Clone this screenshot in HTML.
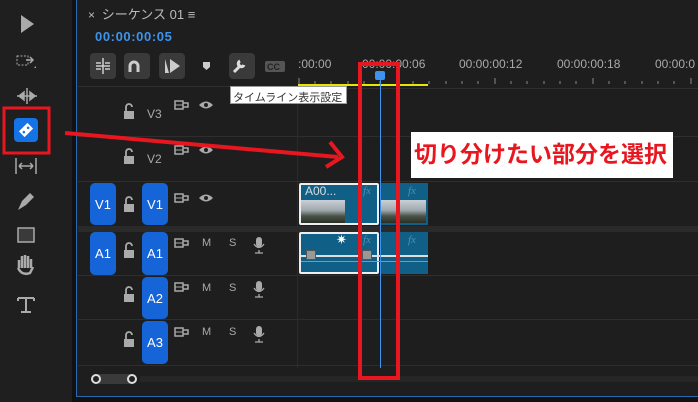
<!DOCTYPE html>
<html><head><meta charset="utf-8"><style>
*{margin:0;padding:0;box-sizing:border-box}
body{width:698px;height:402px;overflow:hidden;background:#1e1e1e;font-family:"Liberation Sans","Noto Sans CJK JP",sans-serif;position:relative;color:#aaa}
.a{position:absolute}
.tb{position:absolute;left:0;top:0;width:72px;height:402px;background:#1f1f1f}
.btn{position:absolute;top:53px;width:26px;height:26px;background:#3a3a3a;border-radius:4px}
.row{position:absolute;left:78px;width:620px;border-bottom:1px solid #2e2e2e}
.blue{position:absolute;width:26px;background:#1565d8;border-radius:5px;color:#fff;font-size:13px;display:flex;align-items:center;justify-content:center}
.lbl{position:absolute;font-size:12px;color:#aaa}
.tc{position:absolute;top:57px;font-size:12px;color:#aaa}
.clip{position:absolute;background:#0f5f86}
.fx{position:absolute;font-style:italic;font-size:11px;color:#4f8fae;font-family:"Liberation Serif",serif}
.thumb{position:absolute;background:linear-gradient(#c9d1d6 0%,#9fa8ac 45%,#4a5247 70%,#2a2f26 100%)}
</style></head><body>
<div class="tb"></div>
<div class="a" style="left:72px;top:0;width:4px;height:402px;background:#111"></div>
<div class="a" style="left:76px;top:0;width:1px;height:397px;background:#2a6ab0"></div>
<div class="a" style="left:76px;top:396px;width:622px;height:1px;background:#2a6ab0"></div>
<div class="a" style="left:76px;top:397px;width:622px;height:5px;background:#111"></div>

<svg class="a" style="left:0;top:0" width="72" height="340">
<path d="M21 15 L21 33 L34 24 Z" fill="#aaa"/>
<rect x="17" y="56" width="11" height="9" fill="none" stroke="#aaa" stroke-dasharray="2,1.5"/>
<path d="M26 60 h7 M30 57 l3 3 -3 3" stroke="#aaa" fill="none" stroke-width="1.5"/>
<path d="M34 68 l2 0 0 -2z" fill="#aaa"/>
<path d="M17 96 h20 M19 96 l5 -4 v8 z M35 96 l-5 -4 v8z M27 88 v16" stroke="#aaa" fill="#aaa" stroke-width="1.5"/>
<rect x="14" y="118" width="24" height="24" rx="4" fill="#1473e6"/>
<g transform="rotate(-45 26 130)"><rect x="20" y="126" width="12" height="8" fill="#fff"/><circle cx="23" cy="130" r="1.3" fill="#1473e6"/><circle cx="29" cy="130" r="1.3" fill="#1473e6"/></g>
<rect x="4" y="108" width="45" height="45" fill="none" stroke="#e8161e" stroke-width="3"/>
<path d="M16 158 v16 M36 158 v16 M19 166 h14 M19 166 l3 -3 M19 166 l3 3 M33 166 l-3 -3 M33 166 l-3 3" stroke="#aaa" stroke-width="1.5" fill="none"/>
<path d="M18 210 l4 -9 8 -8 4 4 -8 8 z" fill="#aaa"/>
<rect x="18" y="228" width="16" height="14" fill="#3a3a3a" stroke="#aaa" stroke-width="1.5"/>
<path d="M19 268 v-8 m3 -4 v12 m3 -13 v13 m3 -12 v12 m3 -9 v9 M18 268 q4 8 12 5 l3 -6" stroke="#aaa" stroke-width="2.5" fill="none"/>
<path d="M18 298 h16 M26 298 v14 M21 312 h10 M18 298 v3 M34 298 v3" stroke="#aaa" stroke-width="2" fill="none"/>
</svg>

<div class="a" style="left:88px;top:4px;font-size:12px;color:#bbb">× &nbsp;<span style="font-size:13px">シーケンス 01 ≡</span></div>
<div class="a" style="left:95px;top:29px;font-size:13px;color:#3c94ee;font-weight:bold;letter-spacing:.6px">00:00:00:05</div>
<div class="btn" style="left:90px"></div>
<div class="btn" style="left:124px"></div>
<div class="btn" style="left:159px"></div>
<div class="btn" style="left:229px"></div>
<svg class="a" style="left:90px;top:53px" width="200" height="26">
<path d="M13 5 v16 M6 10 h5 M6 16 h5 M15 10 h5 M15 16 h5 M6 13 h14" stroke="#ccc" stroke-width="1.5"/>
<path d="M40 19 v-6 a4 4 0 0 1 8 0 v6" stroke="#ccc" stroke-width="3" fill="none"/>
<path d="M75 6 v14 h4 z M80 6 l10 7 -10 7z" fill="#ccc"/>
<path d="M113 9 h7 v5 l-3.5 3 -3.5 -3z" fill="#ccc"/>
<path d="M144 19 l7 -7 M150 8 a3 3 0 1 0 4 4" stroke="#ddd" stroke-width="3" fill="none"/>
<rect x="175" y="8" width="20" height="11" rx="2" fill="#555"/><text x="177" y="17" font-size="9" fill="#222" font-weight="bold" font-family="Liberation Sans">CC</text>
</svg>
<div class="a" style="left:78px;top:86px;width:220px;height:1px;background:#2e2e2e"></div>

<div class="tc" style="left:298px">:00:00</div>
<div class="tc" style="left:362px">00:00:00:06</div>
<div class="tc" style="left:459px">00:00:00:12</div>
<div class="tc" style="left:557px">00:00:00:18</div>
<div class="tc" style="left:655px">00:00:0</div>
<svg class="a" style="left:298px;top:70px" width="400" height="20">
<g stroke="#888" stroke-width="1">
<path d="M1 8v6 M17 11v3 M33 11v3 M50 11v3 M66 11v3 M82 11v3 M99 8v6 M115 11v3 M131 11v3 M148 11v3 M164 11v3 M180 11v3 M197 8v6 M213 11v3 M229 11v3 M246 11v3 M262 11v3 M278 11v3 M295 8v6 M311 11v3 M327 11v3 M344 11v3 M360 11v3 M376 11v3 M393 8v6"/>
</g>
<rect x="-8" y="14" width="138" height="2" fill="#e6e600"/>
</svg>
<div class="a" style="left:298px;top:88px;width:400px;height:1px;background:#2e2e2e"></div>
<div class="a" style="left:297px;top:88px;width:1px;height:280px;background:#2a2a2a"></div>

<div class="row" style="top:90px;height:47px"></div>
<div class="row" style="top:137px;height:45px"></div>
<div class="a" style="left:78px;top:226px;width:620px;height:6px;background:#2a2a2a"></div>
<div class="row" style="top:232px;height:44px"></div>
<div class="row" style="top:276px;height:44px"></div>
<div class="row" style="top:320px;height:46px"></div>

<svg class="a" style="left:120px;top:95px" width="150" height="270">
<g fill="#aaa">
<g id="l"><rect x="4" y="16" width="10" height="8"/><path d="M6 16 v-4 a3 3 0 0 1 6 0" stroke="#aaa" stroke-width="1.8" fill="none"/></g>
<use href="#l" y="45"/><use href="#l" y="93"/><use href="#l" y="139"/><use href="#l" y="183"/><use href="#l" y="228"/>
<g id="t"><path d="M55 6 h8 v8 h-8z M63 8 h5 v4 h-5z" stroke="#aaa" stroke-width="1.5" fill="none"/><path d="M55 10 h8" stroke="#aaa"/></g>
<use href="#t" y="45"/><use href="#t" y="93"/><use href="#t" y="138"/><use href="#t" y="182"/><use href="#t" y="227"/>
<g id="e"><path d="M79 10 q7 -7 14 0 q-7 7 -14 0z"/><circle cx="86" cy="10" r="2" fill="#1e1e1e"/></g>
<use href="#e" y="45"/><use href="#e" y="93"/>
<g id="m"><rect x="136" y="142" width="6" height="10" rx="3"/><path d="M134 149 q5 7 10 0 M139 155 v3 M135 158 h8" stroke="#aaa" stroke-width="1.3" fill="none"/></g>
<use href="#m" y="44"/><use href="#m" y="89"/>
</g>
</svg>
<div class="lbl" style="left:147px;top:107px">V3</div>
<div class="lbl" style="left:147px;top:152px">V2</div>
<div class="lbl" style="left:202px;top:237px;font-size:11px">M</div><div class="lbl" style="left:229px;top:237px;font-size:11px">S</div>
<div class="lbl" style="left:202px;top:282px;font-size:11px">M</div><div class="lbl" style="left:229px;top:282px;font-size:11px">S</div>
<div class="lbl" style="left:202px;top:326px;font-size:11px">M</div><div class="lbl" style="left:229px;top:326px;font-size:11px">S</div>

<div class="blue" style="left:90px;top:183px;height:42px">V1</div>
<div class="blue" style="left:142px;top:183px;height:42px">V1</div>
<div class="blue" style="left:90px;top:232px;height:43px">A1</div>
<div class="blue" style="left:142px;top:232px;height:43px">A1</div>
<div class="blue" style="left:142px;top:277px;height:42px">A2</div>
<div class="blue" style="left:142px;top:321px;height:43px">A3</div>

<div class="clip" style="left:299px;top:183px;width:80px;height:42px;border:2px solid #eee;border-radius:2px"></div>
<div class="thumb" style="left:301px;top:200px;width:44px;height:23px"></div>
<div class="a" style="left:305px;top:184px;font-size:12px;color:#ddd">A00...</div>
<div class="fx" style="left:363px;top:185px">fx</div>
<div class="clip" style="left:380px;top:183px;width:48px;height:42px"></div>
<div class="thumb" style="left:380px;top:200px;width:46px;height:23px"></div>
<div class="fx" style="left:408px;top:185px">fx</div>

<div class="clip" style="left:299px;top:232px;width:80px;height:42px;border:2px solid #eee;border-radius:2px"></div>
<div class="clip" style="left:380px;top:232px;width:48px;height:42px"></div>
<div class="a" style="left:301px;top:255px;width:127px;height:2px;background:#ddd"></div>
<div class="a" style="left:301px;top:261px;width:127px;height:1px;background:#4aa8e0"></div>
<div class="a" style="left:306px;top:250px;width:10px;height:10px;background:#999;border:1px solid #555"></div>
<div class="a" style="left:362px;top:250px;width:10px;height:10px;background:#999;border:1px solid #555"></div>
<div class="a" style="left:336px;top:232px;font-size:13px;color:#fff">✷</div>
<div class="fx" style="left:363px;top:234px">fx</div>
<div class="fx" style="left:408px;top:234px">fx</div>

<div class="a" style="left:375px;top:71px;width:10px;height:9px;background:#3c94ee;border-radius:2px"></div>
<div class="a" style="left:380px;top:78px;width:1px;height:290px;background:#3c94ee"></div>

<div class="a" style="left:94px;top:374px;width:40px;height:10px;background:#3a3a3a;border-radius:5px"></div>
<div class="a" style="left:91px;top:374px;width:10px;height:10px;border:2px solid #ddd;border-radius:50%;background:#222"></div>
<div class="a" style="left:127px;top:374px;width:10px;height:10px;border:2px solid #ddd;border-radius:50%;background:#222"></div>
<div class="a" style="left:140px;top:376px;width:558px;height:6px;background:#262626"></div>

<div class="a" style="left:230px;top:86px;width:117px;height:18px;background:#fff;border:1px solid #999;font-size:11px;color:#333;padding:2px 2px;white-space:nowrap">タイムライン表示設定</div>

<svg class="a" style="left:0;top:0" width="698" height="402">
<path d="M65 133 L338 157" stroke="#e8161e" stroke-width="4"/>
<path d="M330 142 L342 157 L326 167" stroke="#e8161e" stroke-width="4" fill="none"/>
<rect x="360" y="64" width="38" height="314" fill="none" stroke="#e8161e" stroke-width="4"/>
</svg>
<div class="a" style="left:411px;top:132px;width:262px;height:46px;background:#fff"></div>
<div class="a" style="left:414px;top:139px;font-size:23px;line-height:30px;font-weight:bold;color:#e8161e;white-space:nowrap">切り分けたい部分を選択</div>
</body></html>
